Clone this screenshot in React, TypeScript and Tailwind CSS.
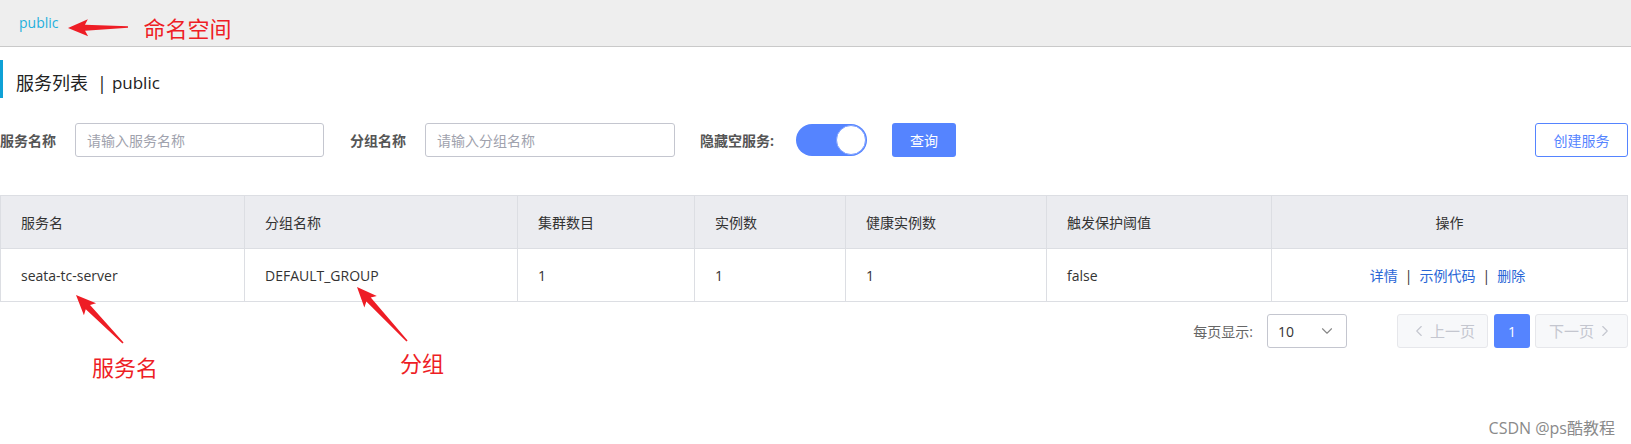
import { ChevronDown, ChevronLeft, ChevronRight } from 'lucide-react'

const cols = [
  { title: '服务名', width: 'w-[244px]' },
  { title: '分组名称', width: 'w-[273px]' },
  { title: '集群数目', width: 'w-[177px]' },
  { title: '实例数', width: 'w-[151px]' },
  { title: '健康实例数', width: 'w-[201px]' },
  { title: '触发保护阈值', width: 'w-[225px]' },
  { title: '操作', width: 'flex-1' },
]

const row = ['seata-tc-server', 'DEFAULT_GROUP', '1', '1', '1', 'false']

// red annotation arrow, from tail to tip
function Arrow({ tip, tail }: { tip: [number, number]; tail: [number, number] }) {
  const [tx, ty] = tip
  const [sx, sy] = tail
  const len = Math.hypot(tx - sx, ty - sy)
  const ux = (tx - sx) / len
  const uy = (ty - sy) / len
  const px = -uy
  const py = ux
  const head = 20
  const wing = 8.5
  const neck = 3
  const bx = tx - ux * head
  const by = ty - uy * head
  const nx = tx - ux * (head - 3)
  const ny = ty - uy * (head - 3)
  const pts = [
    [tx, ty],
    [bx + px * wing, by + py * wing],
    [nx + px * neck, ny + py * neck],
    [sx + px * 0.8, sy + py * 0.8],
    [sx - px * 0.8, sy - py * 0.8],
    [nx - px * neck, ny - py * neck],
    [bx - px * wing, by - py * wing],
  ]
  return <polygon points={pts.map((p) => p.join(',')).join(' ')} fill="#ee1d25" />
}

export default function App() {
  return (
    <div className="relative w-[1631px] h-[444px] bg-white overflow-hidden font-['Open_Sans','Noto_Sans_CJK_SC',sans-serif] text-[#333]">
      {/* 命名空间 */}
      <div className="h-[47px] bg-[#eeeeee] border-b border-[#c9c9c9] flex items-center pl-[19px] pb-[1px]">
        <span className="text-[14px] text-[#1fb0dd]">public</span>
        <span className="ml-[85px] mt-[10px] text-[22px] text-[#ee1d25] font-['Noto_Sans_CJK_SC',sans-serif]">命名空间</span>
      </div>

      {/* 标题 */}
      <div className="mt-[13px] h-[38px] border-l-[3px] border-[#0fa1d6] flex items-center pl-[13px] pt-[8px] text-[18px] text-[#222]">
        <span>服务列表</span>
        <span className="ml-[9px] mr-[5px]">|</span>
        <span className="text-[17px]">public</span>
      </div>

      {/* 查询条件 */}
      <div className="mt-[25px] h-[34px] flex items-center text-[14px] pr-[3px]">
        <span className="w-[59px] font-bold text-[#555] whitespace-nowrap">服务名称</span>
        <div className="ml-[16px] w-[249px] h-[34px] border border-[#c4c6cf] rounded-[3px] flex items-center pl-[11px] text-[#a0a2ad]">
          请输入服务名称
        </div>
        <span className="ml-[26px] w-[59px] font-bold text-[#555] whitespace-nowrap">分组名称</span>
        <div className="ml-[16px] w-[250px] h-[34px] border border-[#c4c6cf] rounded-[3px] flex items-center pl-[11px] text-[#a0a2ad]">
          请输入分组名称
        </div>
        <span className="ml-[25px] font-bold text-[#555] whitespace-nowrap">隐藏空服务:</span>
        <div className="ml-[22px] w-[71px] h-[32px] rounded-full bg-[#5584ff] flex items-center justify-end pr-[1px]">
          <div className="w-[30px] h-[30px] rounded-full bg-white border border-[#7da0ff]" />
        </div>
        <button className="ml-[25px] w-[64px] h-[34px] rounded-[3px] bg-[#5584ff] text-white text-[14px]">查询</button>
        <button className="ml-auto w-[93px] h-[34px] rounded-[3px] border border-[#5584ff] text-[#5584ff] text-[14px] bg-white">
          创建服务
        </button>
      </div>

      {/* 表格 */}
      <div className="mt-[38px] w-[1628px] border border-[#dcdee3] text-[14px]">
        <div className="flex h-[53px] bg-[#ebecf0] border-b border-[#dcdee3]">
          {cols.map((c, i) => (
            <div
              key={c.title}
              className={`${c.width} flex items-center ${i < cols.length - 1 ? 'border-r border-[#dcdee3] pl-[20px]' : 'justify-center'} text-[#333]`}
            >
              {c.title}
            </div>
          ))}
        </div>
        <div className="flex h-[52px]">
          {cols.map((c, i) =>
            i < row.length ? (
              <div key={c.title} className={`${c.width} flex items-center border-r border-[#dcdee3] pl-[20px]`}>
                {row[i]}
              </div>
            ) : (
              <div key={c.title} className="flex-1 flex items-center justify-center text-[#2a66d6] pr-[4px]">
                <span>详情</span>
                <span className="mx-[7px] text-[#333]">|</span>
                <span>示例代码</span>
                <span className="mx-[7px] text-[#333]">|</span>
                <span>删除</span>
              </div>
            )
          )}
        </div>
      </div>

      {/* 分页 */}
      <div className="mt-[12px] w-[1628px] h-[34px] flex items-center justify-end text-[14px]">
        <span className="text-[#666]">每页显示:</span>
        <div className="ml-[14px] w-[80px] h-[34px] border border-[#c4c6cf] rounded-[3px] flex items-center justify-between pl-[10px] pr-[10px]">
          <span className="text-[#333]">10</span>
          <ChevronDown className="w-[18px] h-[18px] text-[#888]" strokeWidth={1.5} />
        </div>
        <div className="ml-[50px] w-[91px] h-[34px] rounded-[3px] border border-[#e6e7eb] bg-[#f7f8fa] text-[#c4c6cf] text-[15px] flex items-center justify-center gap-[2px]">
          <ChevronLeft className="w-[18px] h-[18px]" strokeWidth={1.5} />
          <span>上一页</span>
        </div>
        <div className="ml-[6px] w-[36px] h-[34px] rounded-[3px] bg-[#5584ff] text-white flex items-center justify-center">1</div>
        <div className="ml-[5px] w-[93px] h-[34px] rounded-[3px] border border-[#e6e7eb] bg-[#f7f8fa] text-[#c4c6cf] text-[15px] flex items-center justify-center gap-[2px]">
          <span>下一页</span>
          <ChevronRight className="w-[18px] h-[18px]" strokeWidth={1.5} />
        </div>
      </div>

      {/* 标注文字 */}
      <div className="mt-[0px] h-[40px] flex items-start text-[22px] text-[#ee1d25] font-['Noto_Sans_CJK_SC',sans-serif]">
        <span className="ml-[92px] mt-[2px]">服务名</span>
        <span className="ml-[242px] mt-[-2px]">分组</span>
      </div>

      <div className="absolute right-[16px] top-[416px] text-[16px] text-[#8a8a8a]">CSDN @ps酷教程</div>

      {/* 标注箭头 */}
      <svg className="absolute left-0 top-0 pointer-events-none" width="1631" height="444">
        <Arrow tip={[68, 28]} tail={[128, 27]} />
        <Arrow tip={[76, 295]} tail={[123, 343]} />
        <Arrow tip={[357, 287]} tail={[407, 341]} />
      </svg>
    </div>
  )
}
